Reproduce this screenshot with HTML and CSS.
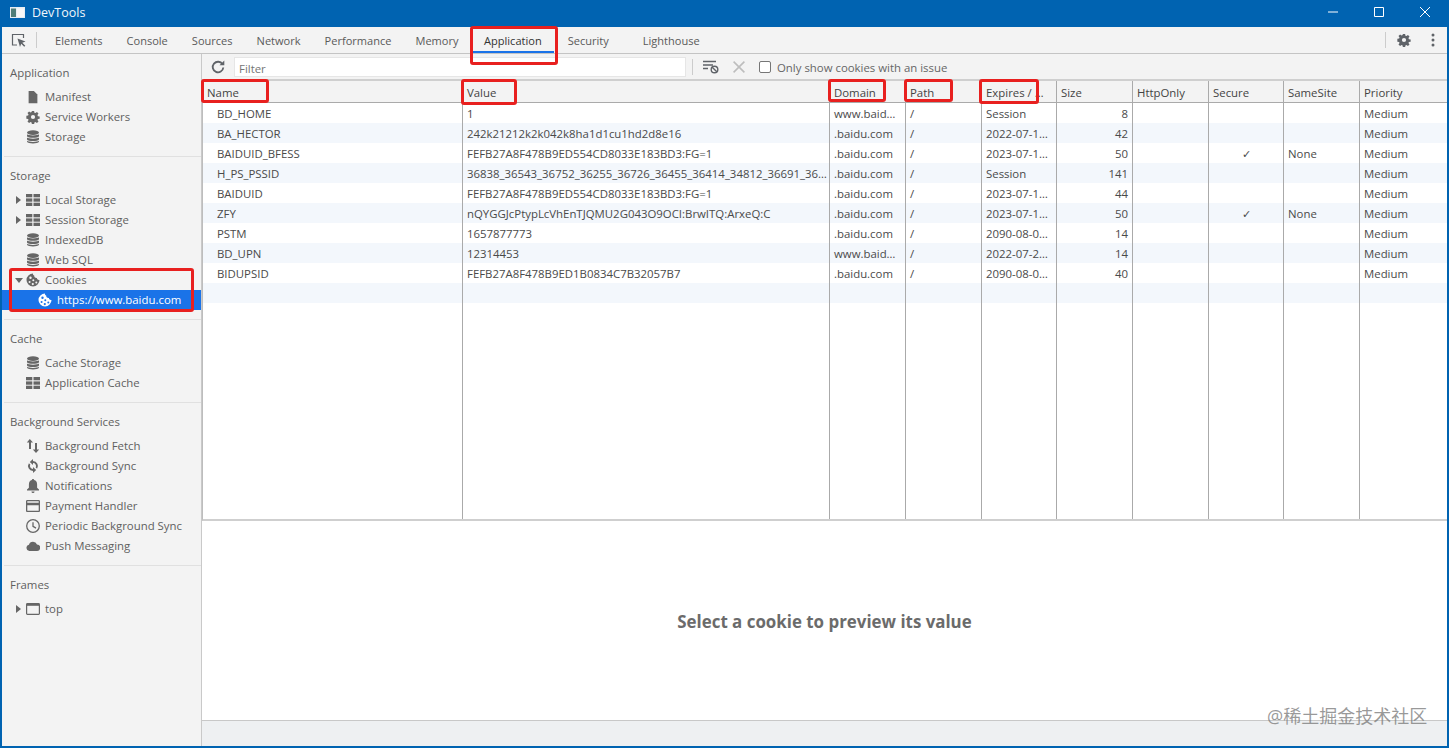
FILE: index.html
```html
<!DOCTYPE html>
<html lang="en">
<head>
<meta charset="utf-8">
<title>DevTools</title>
<link rel="stylesheet" href="styles.css">
</head>
<body>
<svg class="defs" width="0" height="0" aria-hidden="true">
  <symbol id="i-file" viewBox="0 0 14 16"><path d="M2 1h6l4 4v10H2z" fill="currentColor"/></symbol>
  <symbol id="i-gear" viewBox="0 0 16 16"><path fill="currentColor" fill-rule="evenodd" d="M6.7 1h2.6l.3 2 1.2.5 1.7-1.2 1.8 1.8-1.2 1.7.5 1.2 2 .3v2.6l-2 .3-.5 1.2 1.2 1.7-1.8 1.8-1.7-1.2-1.2.5-.3 2H6.7l-.3-2-1.2-.5-1.7 1.2-1.8-1.8 1.2-1.7-.5-1.2-2-.3V6.7l2-.3.5-1.2-1.2-1.7 1.8-1.8 1.7 1.2 1.2-.5zM8 5.6a2.4 2.4 0 1 0 0 4.800a2.4 2.4 0 0 0 0-4.800z"/></symbol>
  <symbol id="i-db" viewBox="0 0 14 14"><g fill="currentColor"><ellipse cx="7" cy="2.600" rx="6" ry="2.300"/><path d="M1 4.300c1 1.500 11 1.500 12 0v2c-1 2-11 2-12 0zM1 7.600c1 1.500 11 1.500 12 0v2c-1 2-11 2-12 0zM1 10.800c1 1.500 11 1.500 12 0v1c-1 2.200-11 2.200-12 0z"/></g></symbol>
  <symbol id="i-grid" viewBox="0 0 14 12"><g fill="currentColor"><rect width="6.300" height="3.300"/><rect x="7.500" width="6.500" height="3.300"/><rect y="4.400" width="6.300" height="3.300"/><rect x="7.500" y="4.400" width="6.500" height="3.300"/><rect y="8.700" width="6.300" height="3.300"/><rect x="7.500" y="8.700" width="6.500" height="3.300"/></g></symbol>
  <symbol id="i-cookie" viewBox="0 0 14 14"><path fill="currentColor" fill-rule="evenodd" d="M7 .5a6.500 6.500 0 1 0 6.500 6.500c-1.600.3-2.600-.7-2.600-1.900C9.300 5.300 8 4.100 8.200 2.600 7.300 2.500 6.900 1.500 7 .5zM4.500 3.500a1.200 1.200 0 1 1 0 2.400 1.200 1.200 0 0 1 0-2.400zM3.600 8a1 1 0 1 1 0 2 1 1 0 0 1 0-2zM7.300 6.300a1 1 0 1 1 0 2 1 1 0 0 1 0-2zM6.800 10a1.100 1.100 0 1 1 0 2.200 1.100 1.100 0 0 1 0-2.200zM10.300 8.500a1 1 0 1 1 0 2 1 1 0 0 1 0-2z"/></symbol>
  <symbol id="i-updown" viewBox="0 0 14 14"><path fill="currentColor" d="M3.800 0 7 3.500H5V10H3V3.500H.8zM9 4h2v6.500h2.200L10 14l-3.200-3.500H9z"/></symbol>
  <symbol id="i-sync" viewBox="0 0 14 14"><path fill="currentColor" d="M7 0v2a5 5 0 0 1 4.100 7.800L9.700 8.400A3 3 0 0 0 7 4v2L3.800 3zM7 14v-2a5 5 0 0 1-4.100-7.800l1.400 1.400A3 3 0 0 0 7 10V8l3.200 3z"/></symbol>
  <symbol id="i-bell" viewBox="0 0 14 14"><path fill="currentColor" d="M7 0c.7 0 1.100.5 1.100 1.100 2 .5 3 2.200 3 4.400v3.200L13 10.600V11.500H1v-.9l1.900-1.900V5.500c0-2.200 1-3.900 3-4.400C5.900.5 6.300 0 7 0zM5.400 12.500h3.200A1.600 1.600 0 0 1 7 14a1.600 1.600 0 0 1-1.600-1.500z"/></symbol>
  <symbol id="i-card" viewBox="0 0 14 12"><path fill="currentColor" fill-rule="evenodd" d="M1.300 0h11.400C13.400 0 14 .6 14 1.300v9.400c0 .7-.6 1.300-1.300 1.300H1.300C.6 12 0 11.400 0 10.700V1.300C0 .6.600 0 1.300 0zM1.300 1.300v1.500h11.400V1.300zM1.300 5.200v5.500h11.400V5.200z"/></symbol>
  <symbol id="i-clock" viewBox="0 0 14 14"><path fill="none" stroke="currentColor" stroke-width="1.300" d="M7 .7a6.300 6.300 0 1 0 0 12.600A6.300 6.300 0 0 0 7 .7zM7 3.200V7.300l3 1.800"/></symbol>
  <symbol id="i-cloud" viewBox="0 0 14 10"><path fill="currentColor" d="M3.300 10A3.200 3.200 0 0 1 2.900 3.700 4.300 4.300 0 0 1 11 3.400 3.300 3.300 0 0 1 10.800 10z"/></symbol>
  <symbol id="i-frame" viewBox="0 0 14 12"><path fill="none" stroke="currentColor" stroke-width="1.200" d="M1.400.6h11.200c.5 0 .8.300.8.800v9.200c0 .5-.3.800-.8.800H1.400c-.5 0-.8-.3-.8-.8V1.400c0-.5.300-.8.800-.8z"/><path fill="currentColor" d="M1 1h12v1.800H1z"/></symbol>
</svg>

<div class="window">
  <header class="titlebar">
    <svg class="app-icon" viewBox="0 0 15 11" width="15" height="11" aria-hidden="true"><rect width="15" height="11" fill="#e6edf3"/><rect x="1" y="1.500" width="5" height="8.500" fill="#4e7d78"/><rect x="7" y="1.500" width="7" height="8.500" fill="#f7f7f7"/></svg>
    <span class="title">DevTools</span>
    <div class="win-controls">
      <svg class="win-btn" viewBox="0 0 12 12" width="12" height="12" aria-hidden="true"><path d="M1 6h10" stroke="#fff" fill="none"/></svg>
      <svg class="win-btn" viewBox="0 0 12 12" width="12" height="12" aria-hidden="true"><path d="M1.500 1.500h9v9h-9z" stroke="#fff" fill="none"/></svg>
      <svg class="win-btn" viewBox="0 0 12 12" width="12" height="12" aria-hidden="true"><path d="M1 1l10 10M11 1L1 11" stroke="#fff" fill="none"/></svg>
    </div>
  </header>

  <nav class="tabbar">
    <svg class="inspect" viewBox="0 0 16 16" width="16" height="16" aria-hidden="true"><path d="M6 13H1.500V2.500h11V6" fill="none" stroke="#5f6368" stroke-width="1.200"/><path d="M6.500 6.500l8 3-3.200 1.200 3 3-1.100 1.100-3-3-1.200 3.200z" fill="#5f6368"/></svg>
    <span class="divider"></span>
    <span class="tab">Elements</span>
    <span class="tab">Console</span>
    <span class="tab">Sources</span>
    <span class="tab">Network</span>
    <span class="tab">Performance</span>
    <span class="tab">Memory</span>
    <span class="tab active">Application</span>
    <span class="tab tab-wide">Security</span>
    <span class="tab">Lighthouse</span>
    <span class="spacer"></span>
    <span class="divider"></span>
    <svg class="settings" width="14" height="14" viewBox="0 0 16 16" aria-hidden="true"><use href="#i-gear"/></svg>
    <svg class="more" viewBox="0 0 4 14" width="4" height="14" aria-hidden="true"><circle cx="2" cy="2" r="1.500"/><circle cx="2" cy="7" r="1.500"/><circle cx="2" cy="12" r="1.500"/></svg>
  </nav>

  <div class="main">
    <aside class="sidebar">
      <section class="group">
        <h2 class="group-title">Application</h2>
        <div class="item"><svg class="ico ico-file"><use href="#i-file"/></svg>Manifest</div>
        <div class="item"><svg class="ico"><use href="#i-gear"/></svg>Service Workers</div>
        <div class="item"><svg class="ico"><use href="#i-db"/></svg>Storage</div>
      </section>
      <section class="group">
        <h2 class="group-title">Storage</h2>
        <div class="item"><i class="arrow"></i><svg class="ico ico-wide"><use href="#i-grid"/></svg>Local Storage</div>
        <div class="item"><i class="arrow"></i><svg class="ico ico-wide"><use href="#i-grid"/></svg>Session Storage</div>
        <div class="item"><svg class="ico"><use href="#i-db"/></svg>IndexedDB</div>
        <div class="item"><svg class="ico"><use href="#i-db"/></svg>Web SQL</div>
        <div class="item"><i class="arrow arrow-down"></i><svg class="ico"><use href="#i-cookie"/></svg>Cookies</div>
        <div class="item item-child selected"><svg class="ico"><use href="#i-cookie"/></svg>https://www.baidu.com</div>
      </section>
      <section class="group">
        <h2 class="group-title">Cache</h2>
        <div class="item"><svg class="ico"><use href="#i-db"/></svg>Cache Storage</div>
        <div class="item"><svg class="ico ico-wide"><use href="#i-grid"/></svg>Application Cache</div>
      </section>
      <section class="group">
        <h2 class="group-title">Background Services</h2>
        <div class="item"><svg class="ico"><use href="#i-updown"/></svg>Background Fetch</div>
        <div class="item"><svg class="ico"><use href="#i-sync"/></svg>Background Sync</div>
        <div class="item"><svg class="ico"><use href="#i-bell"/></svg>Notifications</div>
        <div class="item"><svg class="ico ico-wide"><use href="#i-card"/></svg>Payment Handler</div>
        <div class="item"><svg class="ico"><use href="#i-clock"/></svg>Periodic Background Sync</div>
        <div class="item"><svg class="ico ico-cloud"><use href="#i-cloud"/></svg>Push Messaging</div>
      </section>
      <section class="group group-last">
        <h2 class="group-title">Frames</h2>
        <div class="item"><i class="arrow"></i><svg class="ico ico-wide"><use href="#i-frame"/></svg>top</div>
      </section>
    </aside>

    <div class="content">
      <div class="filterbar">
        <svg class="reload" viewBox="0 0 14 14" width="14" height="14" aria-hidden="true"><path d="M11.500 4.200A5.300 5.300 0 1 0 12.300 7.500" fill="none" stroke="#5f6368" stroke-width="1.800"/><path d="M8.500 5.200h4.800V.4z" fill="#5f6368"/></svg>
        <span class="filter-input">Filter</span>
        <span class="divider filter-div"></span>
        <svg class="clear-filter" viewBox="0 0 16 14" width="16" height="14" aria-hidden="true"><path d="M0 1.500h13M0 5h10M0 8.500h5" stroke="#5f6368" stroke-width="1.400" fill="none"/><circle cx="11.500" cy="9.500" r="3.300" fill="none" stroke="#5f6368" stroke-width="1.400"/><path d="M9.200 7.200l4.600 4.600" stroke="#5f6368" stroke-width="1.400"/></svg>
        <svg class="clear-x" viewBox="0 0 10 10" width="12" height="12" aria-hidden="true"><path d="M.5.500l9 9M9.500.500l-9 9" stroke="#bdbdbd" stroke-width="1.300" fill="none"/></svg>
        <span class="checkbox"></span>
        <span class="check-label">Only show cookies with an issue</span>
      </div>

      <div class="grid">
        <div class="row head">
          <div>Name</div><div>Value</div><div>Domain</div><div>Path</div><div>Expires / …</div><div>Size</div><div>HttpOnly</div><div>Secure</div><div>SameSite</div><div>Priority</div>
        </div>
        <div class="row"><div class="name">BD_HOME</div><div>1</div><div>www.baid…</div><div>/</div><div>Session</div><div class="num">8</div><div></div><div></div><div></div><div>Medium</div></div>
        <div class="row alt"><div class="name">BA_HECTOR</div><div>242k21212k2k042k8ha1d1cu1hd2d8e16</div><div>.baidu.com</div><div>/</div><div>2022-07-1…</div><div class="num">42</div><div></div><div></div><div></div><div>Medium</div></div>
        <div class="row"><div class="name">BAIDUID_BFESS</div><div>FEFB27A8F478B9ED554CD8033E183BD3:FG=1</div><div>.baidu.com</div><div>/</div><div>2023-07-1…</div><div class="num">50</div><div></div><div class="chk">✓</div><div>None</div><div>Medium</div></div>
        <div class="row alt"><div class="name">H_PS_PSSID</div><div>36838_36543_36752_36255_36726_36455_36414_34812_36691_36…</div><div>.baidu.com</div><div>/</div><div>Session</div><div class="num">141</div><div></div><div></div><div></div><div>Medium</div></div>
        <div class="row"><div class="name">BAIDUID</div><div>FEFB27A8F478B9ED554CD8033E183BD3:FG=1</div><div>.baidu.com</div><div>/</div><div>2023-07-1…</div><div class="num">44</div><div></div><div></div><div></div><div>Medium</div></div>
        <div class="row alt"><div class="name">ZFY</div><div>nQYGGJcPtypLcVhEnTJQMU2G043O9OCI:BrwITQ:ArxeQ:C</div><div>.baidu.com</div><div>/</div><div>2023-07-1…</div><div class="num">50</div><div></div><div class="chk">✓</div><div>None</div><div>Medium</div></div>
        <div class="row"><div class="name">PSTM</div><div>1657877773</div><div>.baidu.com</div><div>/</div><div>2090-08-0…</div><div class="num">14</div><div></div><div></div><div></div><div>Medium</div></div>
        <div class="row alt"><div class="name">BD_UPN</div><div>12314453</div><div>www.baid…</div><div>/</div><div>2022-07-2…</div><div class="num">14</div><div></div><div></div><div></div><div>Medium</div></div>
        <div class="row"><div class="name">BIDUPSID</div><div>FEFB27A8F478B9ED1B0834C7B32057B7</div><div>.baidu.com</div><div>/</div><div>2090-08-0…</div><div class="num">40</div><div></div><div></div><div></div><div>Medium</div></div>
        <div class="row alt"><div></div><div></div><div></div><div></div><div></div><div></div><div></div><div></div><div></div><div></div></div>
        <div class="row filler"><div></div><div></div><div></div><div></div><div></div><div></div><div></div><div></div><div></div><div></div></div>
      </div>

      <div class="preview">Select a cookie to preview its value</div>
      <div class="statusbar"></div>
    </div>
  </div>

  <span class="mark mark-app"></span>
  <span class="mark mark-name"></span>
  <span class="mark mark-value"></span>
  <span class="mark mark-domain"></span>
  <span class="mark mark-path"></span>
  <span class="mark mark-expires"></span>
  <span class="mark mark-cookies"></span>
  <span class="watermark">@稀土掘金技术社区</span>
</div>
</body>
</html>
```

FILE: styles.css
```css
* { box-sizing: border-box; }
html, body { margin: 0; padding: 0; height: 100%; overflow: hidden; }
body { font-family: "Open Sans", "Liberation Sans", sans-serif; font-size: 11.4px; color: #444; background: #fff; }
.defs { position: absolute; }

.window { position: relative; width: 1449px; height: 748px; display: flex; flex-direction: column; border: solid #0063b1; border-width: 0 2px 2px 2px; }

.titlebar { flex: none; height: 27px; margin: 0 -2px; background: #0063b1; color: #f1f6fb; display: flex; align-items: center; padding: 0 0 3px 10px; }
.app-icon { flex: none; }
.title { margin-left: 7px; font-size: 12.5px; }
.win-controls { margin-left: auto; display: flex; gap: 34px; padding-right: 18px; }
.win-btn { display: block; }

.tabbar { flex: none; height: 27px; background: #f3f3f3; border-bottom: 1px solid #c4c4c4; display: flex; align-items: center; color: #5a5a5a; padding-left: 9px; font-size: 11.05px; }
.inspect { flex: none; }
.divider { flex: none; width: 1px; height: 16px; background: #ccc; margin-left: 9px; }
.tab { flex: none; height: 26px; line-height: 27px; padding: 0 12px; }
.tabbar .divider + .tab { margin-left: 6px; }
.tab.active { border-bottom: 2px solid #1a73e8; color: #333; margin: 0 2px 0 1.500px; }
.tab-wide { padding-right: 22px; }
.spacer { flex: 1; }
.settings { color: #5f6368; margin-left: 11px; flex: none; }
.more { fill: #5f6368; margin: 0 12px 0 20px; flex: none; }

.main { flex: 1; min-height: 0; display: flex; }

.sidebar { flex: none; width: 200px; background: #f3f3f3; border-right: 1px solid #c9c9c9; color: #5f5f5f; overflow: hidden; }
.group { padding-top: 9px; }
.group::after { content: ""; display: block; height: 1px; margin: 9px 0 0 2px; background: #e0e0e0; }
.group-last::after { display: none; }
.group-title { margin: 0 0 4px 8px; font-weight: 400; font-size: 11.4px; line-height: 20px; color: #5f5f5f; }
.item { position: relative; height: 20px; line-height: 20px; padding-left: 43px; white-space: nowrap; }
.ico { position: absolute; left: 24px; top: 3px; width: 14px; height: 14px; color: #666; }
.ico-wide { top: 4px; height: 12px; }
.ico-cloud { top: 5px; height: 10px; }
.arrow { position: absolute; left: 14px; top: 6px; width: 0; height: 0; border-style: solid; border-width: 4px 0 4px 5px; border-color: transparent transparent transparent #666; }
.arrow-down { left: 13px; top: 8px; border-width: 5px 4px 0 4px; border-color: #666 transparent transparent transparent; }
.item-child { padding-left: 55px; }
.item-child .ico { left: 36px; }
.selected { background: #1a73e8; color: #fff; }
.selected .ico { color: #fff; }

.content { flex: 1; min-width: 0; display: flex; flex-direction: column; background: #fff; }
.filterbar { flex: none; height: 27px; background: #f3f3f3; border-bottom: 2px solid #cfcfcf; display: flex; align-items: center; color: #666; padding: 1px 0 0 9px; }
.reload { flex: none; }
.filter-input { flex: none; width: 452px; height: 20px; margin-left: 9px; background: #fff; border: 1px solid #e6e6e6; line-height: 21px; padding-left: 4px; color: #757575; }
.filter-div { margin-left: 6px; }
.clear-filter { flex: none; margin-left: 10px; }
.clear-x { flex: none; margin-left: 14px; }
.checkbox { flex: none; width: 12px; height: 12px; margin-left: 14px; background: #fff; border: 1px solid #767676; border-radius: 2px; }
.check-label { margin-left: 6px; }

.grid { flex: none; height: 440px; display: flex; flex-direction: column; border-left: 1px solid #bdbdbd; border-bottom: 2px solid #cfcfcf; overflow: hidden; }
.row { flex: none; height: 20px; display: grid; grid-template-columns: 260px 367px 76px 76px 75px 76px 76px 75px 76px 1fr; line-height: 22px; color: #4a4a4a; }
.row > div { padding: 0 4px; border-right: 1px solid #aaa; overflow: hidden; white-space: nowrap; }
.row > div:last-child { border-right: 0; }
.head { height: 22px; line-height: 24px; background: #f3f3f3; border-bottom: 1px solid #aaa; color: #444; }
.alt { background: #f3f7fc; }
.row > .name { padding-left: 14px; }
.row > .num { text-align: right; }
.row > .chk { text-align: center; }
.filler { flex: 1; height: auto; }

.preview { flex: 1; display: flex; align-items: center; justify-content: center; padding-top: 2px; font-size: 16.9px; font-weight: 700; color: #6b6b6b; }
.statusbar { flex: none; height: 26px; background: #eef0f2; border-top: 1px solid #c8c8c8; }

.mark { position: absolute; border: 3px solid #e8201f; border-radius: 3px; pointer-events: none; }
.mark-app { left: 468px; top: 26px; width: 88px; height: 39px; }
.mark-name { left: 199px; top: 79px; width: 68px; height: 24px; }
.mark-value { left: 459px; top: 79px; width: 56px; height: 26px; }
.mark-domain { left: 826px; top: 79px; width: 58px; height: 23px; }
.mark-path { left: 902px; top: 79px; width: 49px; height: 23px; }
.mark-expires { left: 977px; top: 79px; width: 60px; height: 25px; }
.mark-cookies { left: 7px; top: 268px; width: 185px; height: 44px; }
.watermark { position: absolute; left: 1265px; top: 704px; font-family: "Open Sans", "Noto Sans CJK SC", sans-serif; font-size: 18px; line-height: 24px; color: rgba(120,120,120,.75); white-space: nowrap; }
```
